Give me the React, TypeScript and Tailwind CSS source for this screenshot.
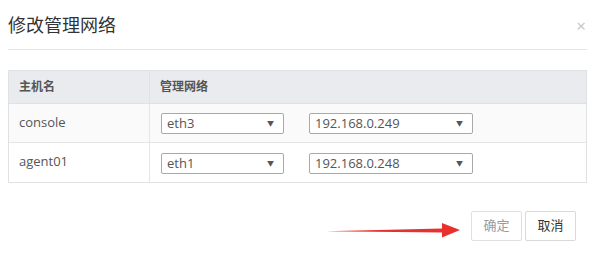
import React from "react";

const Select = ({ value, w }: { value: string; w: string }) => (
  <div
    className={`${w} h-[21px] border border-[#a9a9a9] rounded-[2px] bg-white flex items-center justify-between pl-[5px] pr-[9px] text-[13px] text-[#555]`}
  >
    <span className="leading-none">{value}</span>
    <span className="text-[7px] text-[#555] leading-none">▼</span>
  </div>
);

export default function App() {
  const rows = [
    { host: "console", nic: "eth3", ip: "192.168.0.249" },
    { host: "agent01", nic: "eth1", ip: "192.168.0.248" },
  ];
  return (
    <div
      className="relative w-[595px] h-[261px] bg-white"
      style={{ fontFamily: '"Open Sans", "Noto Sans CJK SC", sans-serif' }}
    >
      <div className="mx-[8px] h-[50px] border-b border-[#e5e5e5] flex items-center justify-between">
        <div className="text-[18px] text-[#333] leading-none pt-[1px]">修改管理网络</div>
        <div className="text-[17px] text-[#c4c4c4] leading-none mr-[1px] mt-[2px]">×</div>
      </div>
      <div className="mx-[8px] mt-[20px] border border-[#dfe2e5]">
        <div className="flex h-[33px] bg-[#e9ebee] border-b border-[#dfe2e5] text-[12px] text-[#555] font-semibold">
          <div className="w-[141px] border-r border-[#dfe2e5] flex items-center pl-[10px]">主机名</div>
          <div className="flex-1 flex items-center pl-[10px]">管理网络</div>
        </div>
        {rows.map((r, i) => (
          <div
            key={r.host}
            className={`flex h-[39px] text-[13px] text-[#555] ${i === 0 ? "bg-[#fafafa] border-b border-[#e5e5e5]" : "bg-white"}`}
          >
            <div className="w-[141px] border-r border-[#e5e5e5] pl-[10px] pt-[9px]">{r.host}</div>
            <div className="flex-1 flex items-center pl-[11px] gap-[25px] pt-[1px]">
              <Select value={r.nic} w="w-[123px]" />
              <Select value={r.ip} w="w-[164px]" />
            </div>
          </div>
        ))}
      </div>
      <div className="flex justify-end gap-[3px] mr-[19px] mt-[28px]">
        <button className="w-[51px] h-[30px] border border-[#e0e0e0] rounded-[2px] bg-white text-[13px] text-[#9a9a9a]">
          确定
        </button>
        <button className="w-[51px] h-[30px] border border-[#d9d9d9] rounded-[2px] bg-white text-[13px] text-[#333]">
          取消
        </button>
      </div>
      <svg className="absolute left-[325px] top-[222px]" width="136" height="16" viewBox="0 0 136 16">
        <path d="M1 9.3 L117 6.6 L117 1 L135 8 L117 15.5 L117 10.5 Z" fill="#e8312e" />
      </svg>
    </div>
  );
}
